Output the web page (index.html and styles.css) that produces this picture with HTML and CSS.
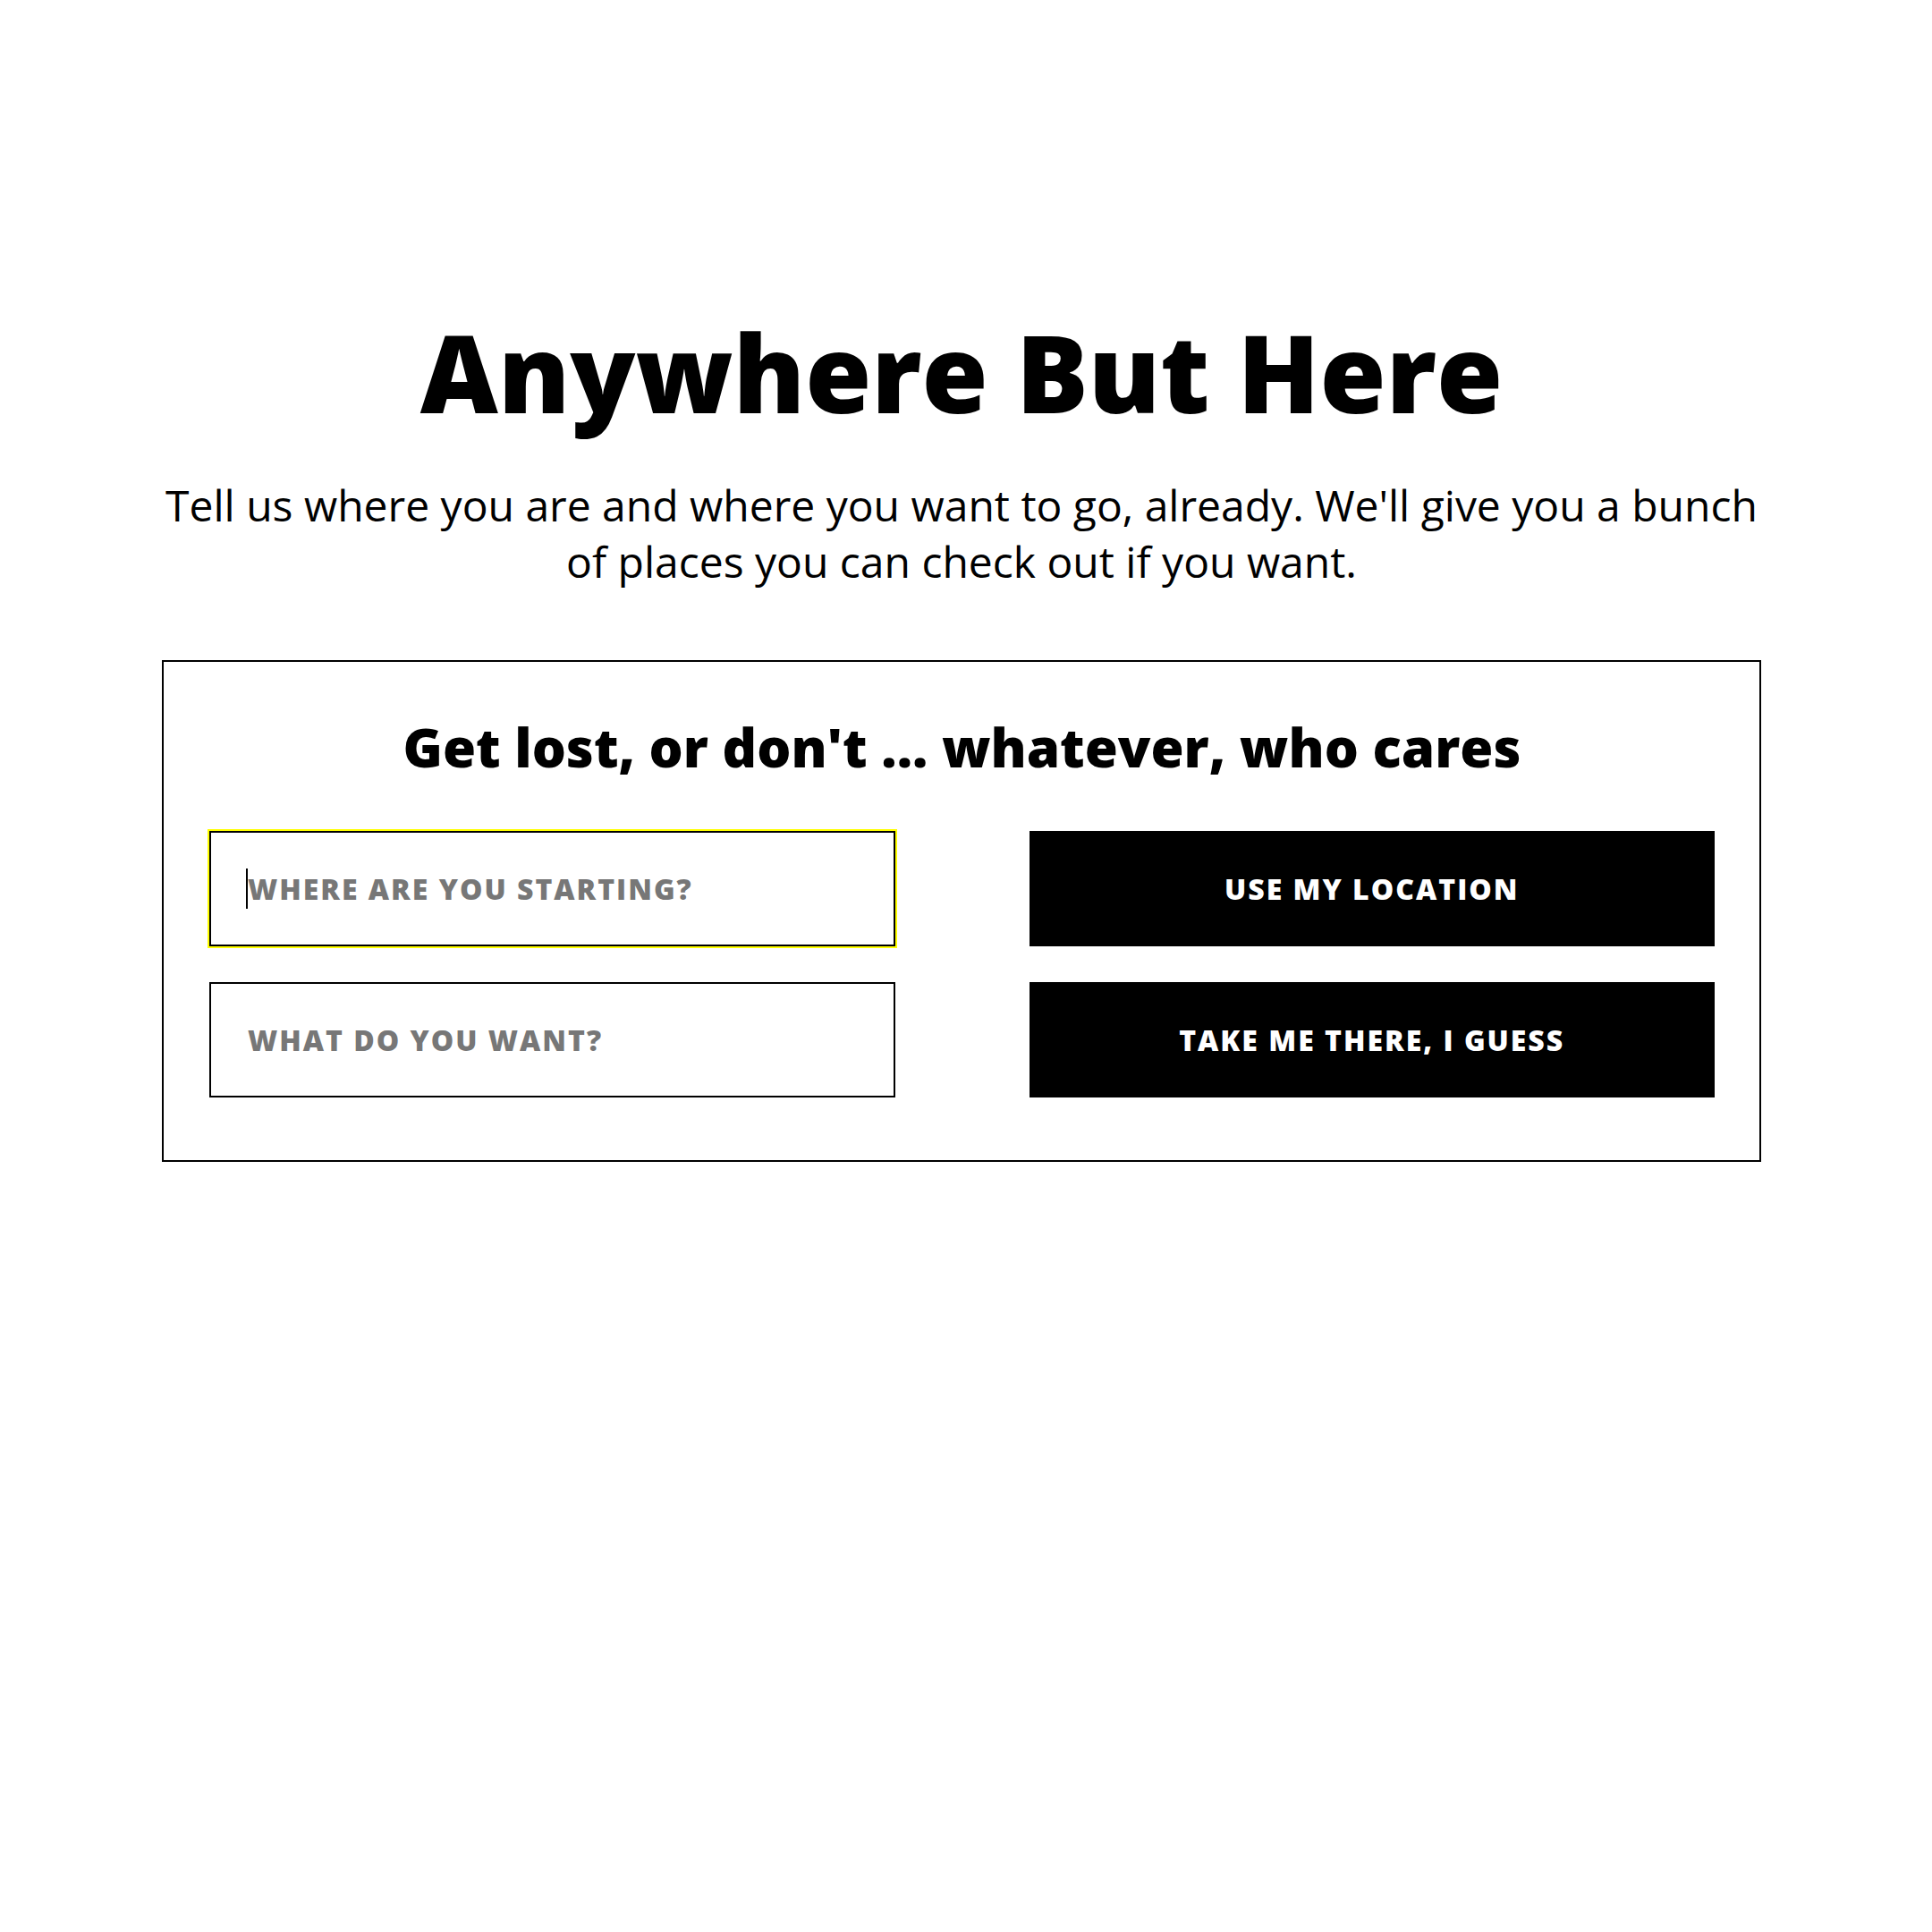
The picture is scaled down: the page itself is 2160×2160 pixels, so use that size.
FILE: index.html
```html
<!DOCTYPE html>
<html lang="en">
<head>
<meta charset="utf-8">
<title>Anywhere But Here</title>
<link rel="stylesheet" href="styles.css">
</head>
<body>
<main class="page">
  <header class="intro">
    <h1 class="title">Anywhere But Here</h1>
    <p class="lead">Tell us where you are and where you want to go, already. We'll give you a bunch of places you can check out if you want.</p>
  </header>
  <section class="card">
    <h2 class="card-title">Get lost, or don't ... whatever, who cares</h2>
    <form class="grid">
      <div class="field field-focus">
        <input class="input" type="text" placeholder="Where are you starting?">
        <span class="caret"></span>
      </div>
      <button class="btn" type="button">Use my location</button>
      <div class="field">
        <input class="input" type="text" placeholder="What do you want?">
      </div>
      <button class="btn" type="button">Take me there, I guess</button>
    </form>
  </section>
</main>
</body>
</html>
```

FILE: styles.css
```css
* { box-sizing: border-box; }
html, body { margin: 0; padding: 0; background: #fff; }
body { font-family: "Open Sans", "Noto Sans", sans-serif; color: #000; }

.page {
  width: 1788px;
  margin: 0 0 0 181px;
  padding-top: 344px;
}

.intro { text-align: center; }

.title {
  margin: 0;
  font-size: 120px;
  font-weight: 800;
  line-height: 144px;
}

.lead {
  margin: 45px 0 0;
  font-size: 48px;
  line-height: 63px;
  font-weight: 400;
}

.card {
  margin-top: 79px;
  border: 2px solid #000;
  padding: 59px 50px 70px 51px;
}

.card-title {
  margin: 0 0 58px;
  text-align: center;
  font-size: 60px;
  font-weight: 800;
  line-height: 72px;
}

.grid {
  display: grid;
  grid-template-columns: 1fr 1fr;
  column-gap: 150px;
  row-gap: 40px;
}

.field { position: relative; }

.input {
  display: block;
  width: 100%;
  height: 129px;
  border: 2px solid #000;
  padding: 0 40px 0 41px;
  font-family: "Open Sans", sans-serif;
  font-size: 32px;
  font-weight: 800;
  letter-spacing: 2px;
  text-transform: uppercase;
  background: #fff;
  outline: none;
}
.input::placeholder { color: #777; opacity: 1; text-transform: uppercase; }

.field-focus .input { outline: 2px solid #ff0; }

.caret {
  position: absolute;
  left: 41px;
  top: 42px;
  width: 2px;
  height: 45px;
  background: #000;
}

.btn {
  height: 129px;
  border: 0;
  background: #000;
  color: #fff;
  font-family: "Open Sans", sans-serif;
  font-size: 32px;
  font-weight: 800;
  letter-spacing: 2px;
  text-transform: uppercase;
}
```
